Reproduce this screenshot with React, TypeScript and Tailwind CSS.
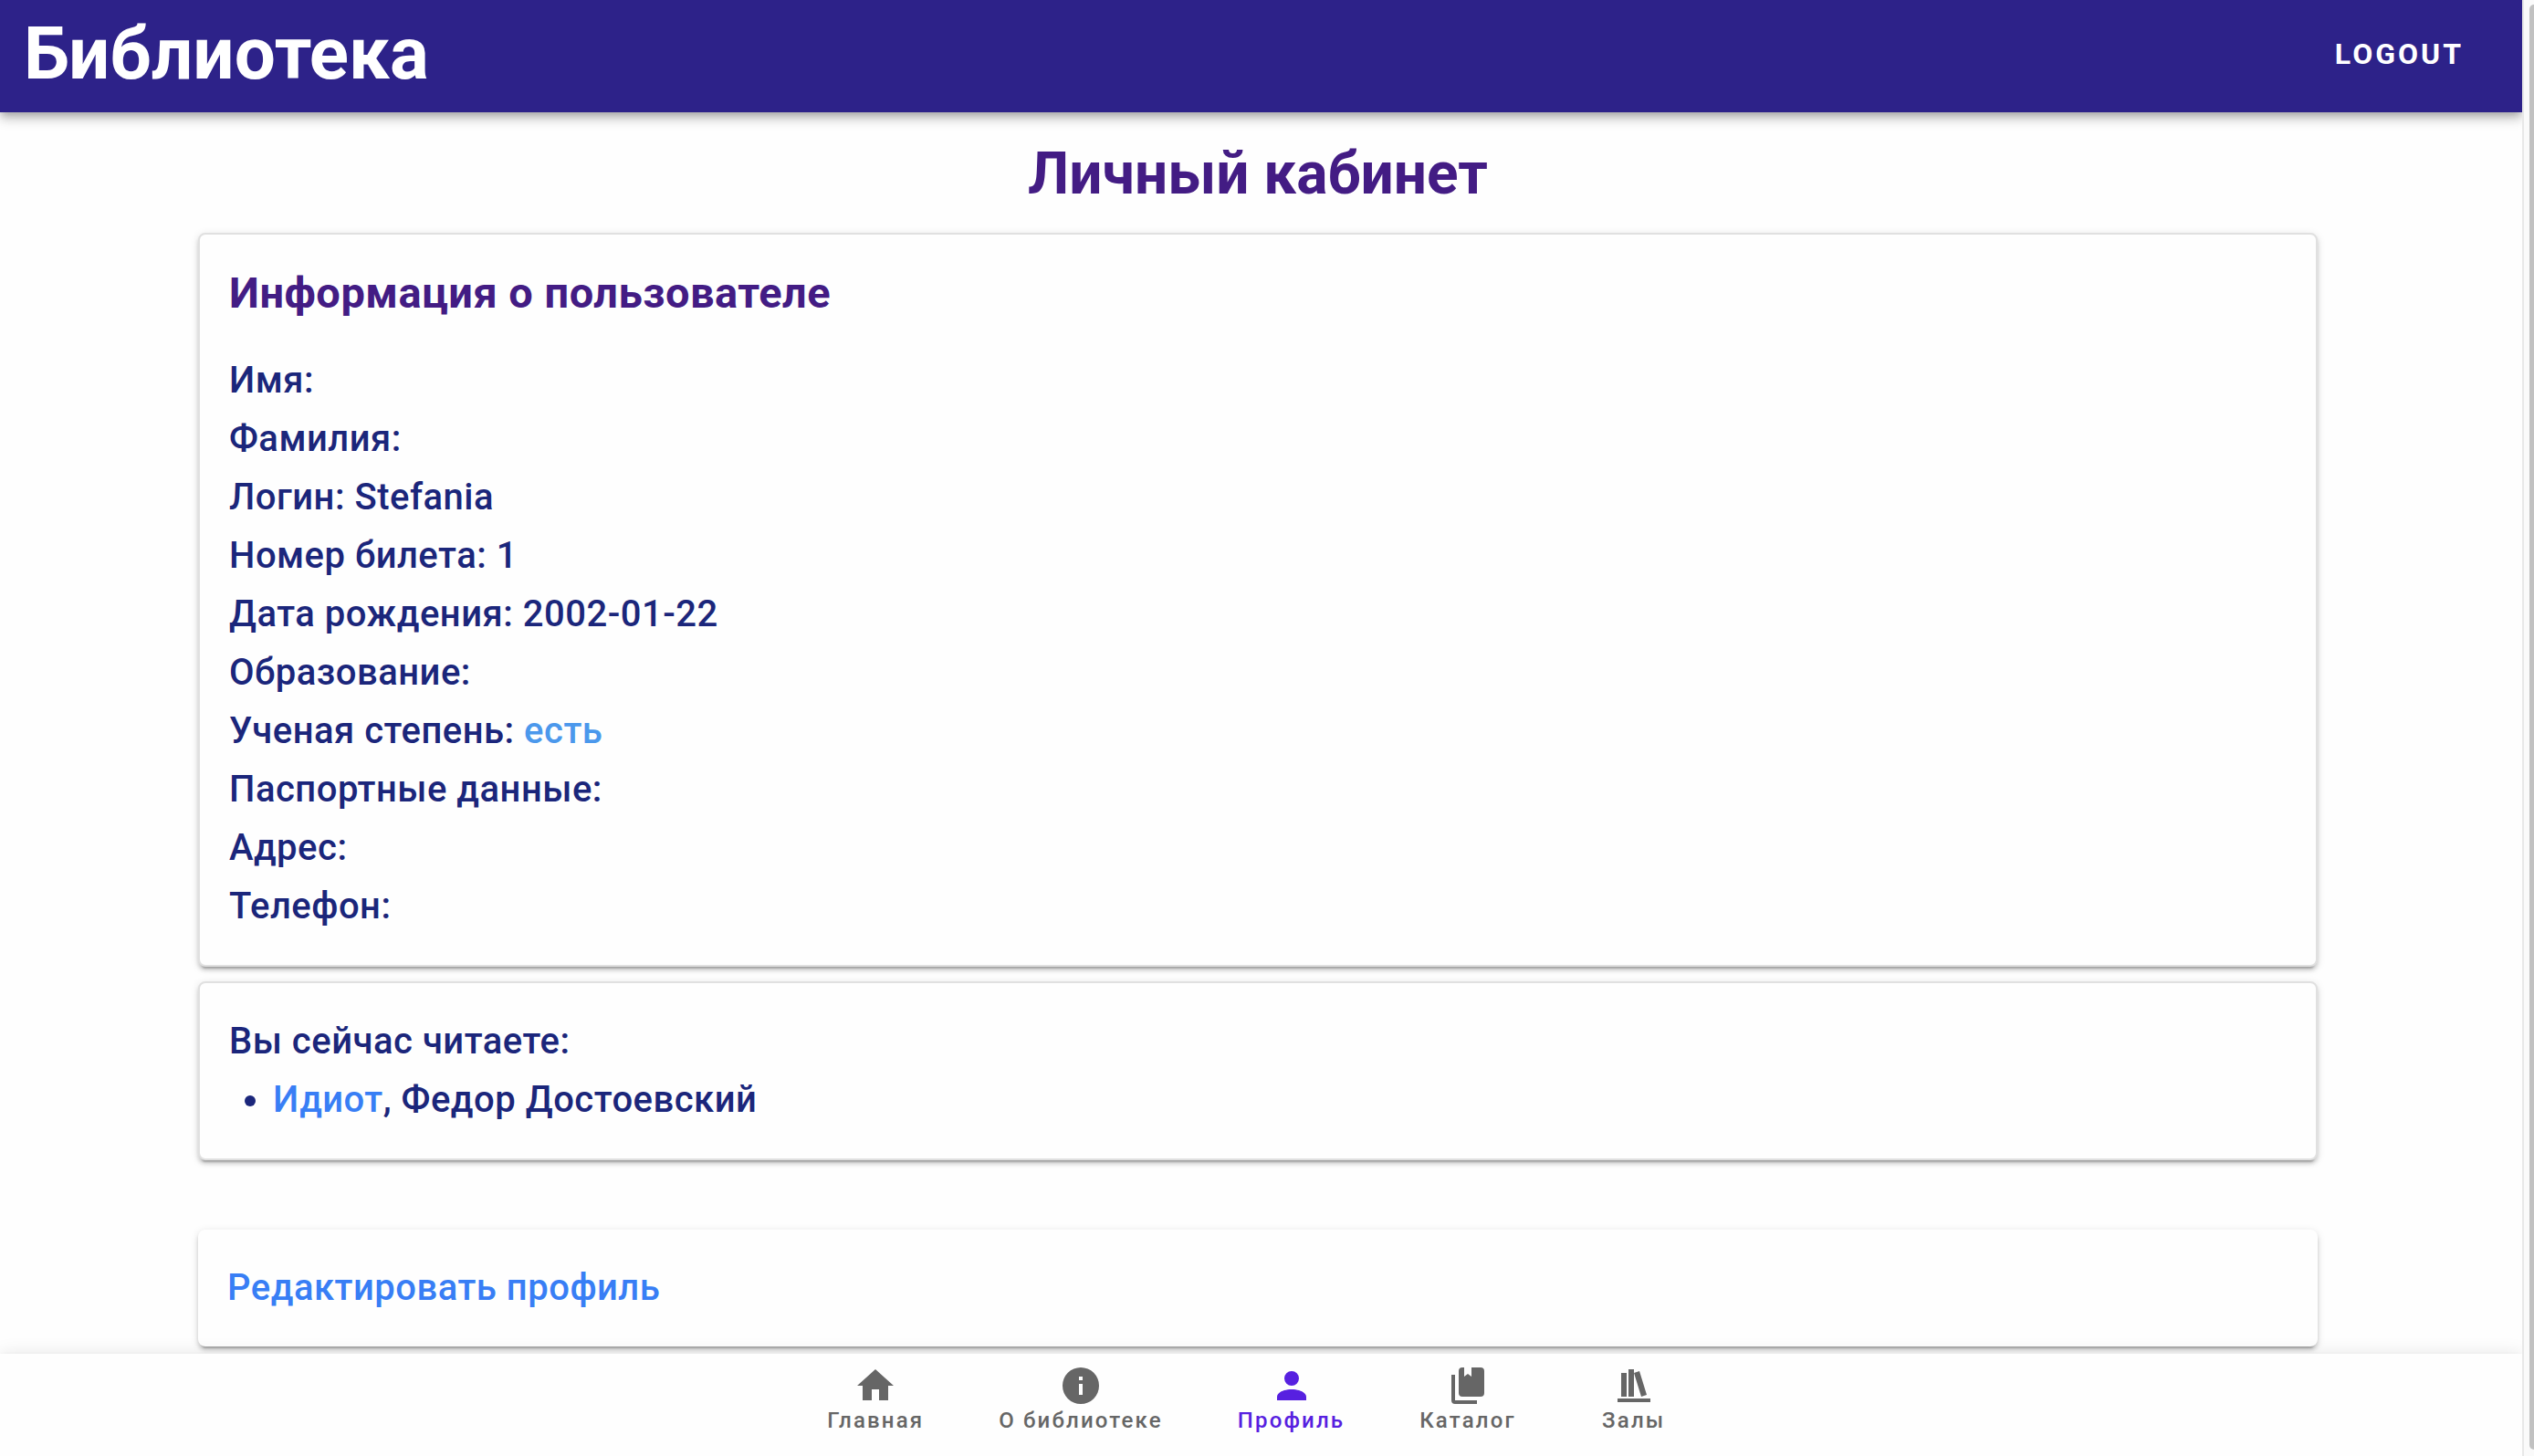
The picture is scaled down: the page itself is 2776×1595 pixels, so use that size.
import type { ReactNode } from "react";

const cardShadow =
  "shadow-[0_6px_2px_-4px_rgba(0,0,0,0.2),0_4px_4px_0_rgba(0,0,0,0.14),0_2px_10px_0_rgba(0,0,0,0.12)]";

const fields = [
  { label: "Имя:" },
  { label: "Фамилия:" },
  { label: "Логин:", value: "Stefania" },
  { label: "Номер билета:", value: "1" },
  { label: "Дата рождения:", value: "2002-01-22" },
  { label: "Образование:" },
  { label: "Ученая степень:", value: "есть", accent: true },
  { label: "Паспортные данные:" },
  { label: "Адрес:" },
  { label: "Телефон:" },
];

const tabs = [
  { label: "Главная", path: "M10,20V14H14V20H19V12H22L12,3L2,12H5V20H10Z" },
  {
    label: "О библиотеке",
    path: "M13,9H11V7H13M13,17H11V11H13M12,2A10,10 0 0,0 2,12A10,10 0 0,0 12,22A10,10 0 0,0 22,12A10,10 0 0,0 12,2Z",
  },
  {
    label: "Профиль",
    active: true,
    path: "M12,4A4,4 0 0,1 16,8A4,4 0 0,1 12,12A4,4 0 0,1 8,8A4,4 0 0,1 12,4M12,14C16.42,14 20,15.79 20,18V20H4V18C4,15.79 7.58,14 12,14Z",
  },
  {
    label: "Каталог",
    path: "M19,18H9A2,2 0 0,1 7,16V4A2,2 0 0,1 9,2H10V7L12,5.5L14,7V2H19A2,2 0 0,1 21,4V16A2,2 0 0,1 19,18M17,20V22H5A2,2 0 0,1 3,20V6H5V20H17Z",
  },
  {
    label: "Залы",
    path: "M9 3V18H12V3H9M12 5L16 18L19 17L15 4L12 5M5 5V18H8V5H5M3 19V21H21V19H3Z",
  },
];

function Card({ outlined = true, children }: { outlined?: boolean; children: ReactNode }) {
  return (
    <section
      className={`rounded-lg bg-[#fefefe] p-8 ${cardShadow} ${outlined ? "border-2 border-[#e0e0e0]" : ""}`}
    >
      {children}
    </section>
  );
}

export default function App() {
  return (
    <div className="flex h-screen overflow-hidden bg-[#fefefe] font-['Roboto',sans-serif] text-[#1b267b]">
      <div className="flex min-w-0 flex-1 flex-col overflow-hidden">
        <header className="relative z-10 flex h-[123px] shrink-0 items-center justify-between bg-[#2d2289] pr-8 pl-[26px] text-white shadow-[0_4px_8px_-2px_rgba(0,0,0,0.2),0_8px_10px_0_rgba(0,0,0,0.14),0_2px_20px_0_rgba(0,0,0,0.12)]">
          <div className="pb-1.5 text-[80px] leading-[96px] font-bold">Библиотека</div>
          <button type="button" className="px-8 pb-1.5 text-[32px] leading-10 font-bold tracking-[3px]">
            LOGOUT
          </button>
        </header>

        <main className="min-h-0 flex-1 pr-[224px] pl-[217px] text-[40px] leading-[64px] font-medium tracking-[0.0125em]">
          <h1 className="pt-7 pb-6 text-center text-[64px] leading-[80px] font-bold tracking-normal text-[#431c84]">
            Личный кабинет
          </h1>

          <div className="flex flex-col gap-4">
            <Card>
              <h2 className="mb-8 text-[47px] font-bold text-[#431c84]">
                Информация о пользователе
              </h2>
              <dl>
                {fields.map((f) => (
                  <div key={f.label}>
                    <dt className="inline">{f.label}</dt>{" "}
                    <dd className={f.accent ? "inline text-[#4b98ec]" : "inline"}>{f.value}</dd>
                  </div>
                ))}
              </dl>
            </Card>

            <Card>
              <p>Вы сейчас читаете:</p>
              <ul className="list-disc pl-12">
                <li>
                  <a href="#idiot" className="text-[#387ef5]">
                    Идиот
                  </a>
                  , Федор Достоевский
                </li>
              </ul>
            </Card>
          </div>

          <div className="mt-[76px]">
            <Card outlined={false}>
              <a href="#edit" className="block text-[#387ef5]">
                Редактировать профиль
              </a>
            </Card>
          </div>
        </main>

        <nav className="relative z-10 flex h-28 shrink-0 justify-center gap-4 bg-[#fefefe] pr-5 shadow-[0_4px_8px_-2px_rgba(0,0,0,0.2),0_8px_10px_0_rgba(0,0,0,0.14),0_2px_20px_0_rgba(0,0,0,0.12)]">
          {tabs.map((t) => (
            <a
              key={t.label}
              href={`#${t.label}`}
              aria-current={t.active ? "page" : undefined}
              className={`flex min-w-40 flex-col items-center px-[33px] pt-[11px] text-2xl leading-7 font-medium tracking-[0.09em] ${
                t.active ? "text-[#5720e0]" : "text-[#666666]"
              }`}
            >
              <svg viewBox="0 0 24 24" className="size-12" fill="currentColor" aria-hidden="true">
                <path d={t.path} />
              </svg>
              {t.label}
            </a>
          ))}
        </nav>
      </div>

      <div
        className="flex w-[13px] shrink-0 justify-end border-l-2 border-[#e8e8e8] bg-[#fafafa] pt-[5px] pb-[7px]"
        aria-hidden="true"
      >
        <div className="w-[5px] rounded-l-[5px] bg-[#c1c1c1]" />
      </div>
    </div>
  );
}
